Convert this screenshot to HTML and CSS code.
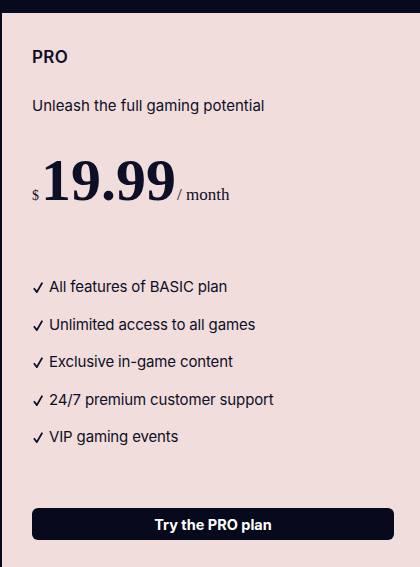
FILE: index.html
```html
<!DOCTYPE html>
<html lang="en">
<head>
<meta charset="utf-8">
<title>PRO plan</title>
<link rel="stylesheet" href="styles.css">
</head>
<body>
<main class="page">
  <section class="card">
    <h2 class="plan-name">PRO</h2>
    <p class="plan-desc">Unleash the full gaming potential</p>
    <div class="price">
      <span class="currency">$</span><span class="amount">19.99</span><span class="period">/ month</span>
    </div>
    <ul class="features">
      <li><svg class="check" viewBox="0 0 10 11" aria-hidden="true"><path d="M0.9 6.3 L3.8 10.1 L9.3 0.6"/></svg>All features of BASIC plan</li>
      <li><svg class="check" viewBox="0 0 10 11" aria-hidden="true"><path d="M0.9 6.3 L3.8 10.1 L9.3 0.6"/></svg>Unlimited access to all games</li>
      <li><svg class="check" viewBox="0 0 10 11" aria-hidden="true"><path d="M0.9 6.3 L3.8 10.1 L9.3 0.6"/></svg>Exclusive in-game content</li>
      <li><svg class="check" viewBox="0 0 10 11" aria-hidden="true"><path d="M0.9 6.3 L3.8 10.1 L9.3 0.6"/></svg>24/7 premium customer support</li>
      <li><svg class="check" viewBox="0 0 10 11" aria-hidden="true"><path d="M0.9 6.3 L3.8 10.1 L9.3 0.6"/></svg>VIP gaming events</li>
    </ul>
    <button class="cta">Try the PRO plan</button>
  </section>
</main>
</body>
</html>
```
FILE: styles.css
```css
html, body {
  margin: 0;
  padding: 0;
  background: #070a1c;
  overflow: hidden;
}
.page {
  padding: 13px 0 0 2px;
}
.card {
  box-sizing: border-box;
  width: 422px;
  background: #f1dddb;
  padding: 34px 30px 40px;
  color: #0c0f26;
  font-family: Inter, "Liberation Sans", sans-serif;
}
.plan-name {
  margin: 0;
  font-size: 17px;
  line-height: 20px;
  font-weight: 600;
  letter-spacing: 0.4px;
}
.plan-desc {
  margin: 29px 0 0;
  font-size: 15px;
  line-height: 20px;
  font-weight: 400;
}
.price {
  margin-top: 34px;
  display: flex;
  align-items: baseline;
  font-family: "Liberation Serif", "Times New Roman", serif;
  line-height: 1;
}
.currency {
  font-size: 14px;
  margin-right: 2px;
}
.amount {
  font-size: 60px;
  font-weight: 700;
  margin-right: 1px;
}
.period {
  font-size: 17px;
}
.features {
  list-style: none;
  margin: 67px 0 0;
  padding: 0;
  display: flex;
  flex-direction: column;
  gap: 17.5px;
}
.features li {
  font-size: 15px;
  line-height: 20px;
  letter-spacing: -0.15px;
}
.check {
  width: 10px;
  height: 11px;
  margin: 0 6px 0 1px;
  vertical-align: -1px;
  fill: none;
  stroke: #0c0f26;
  stroke-width: 1.8;
}
.cta {
  display: block;
  width: 100%;
  height: 32px;
  margin-top: 61px;
  border: none;
  border-radius: 6px;
  background: #070a1c;
  color: #ffffff;
  font-family: Inter, "Liberation Sans", sans-serif;
  font-size: 14.5px;
  font-weight: 700;
  letter-spacing: 0;
}
```
